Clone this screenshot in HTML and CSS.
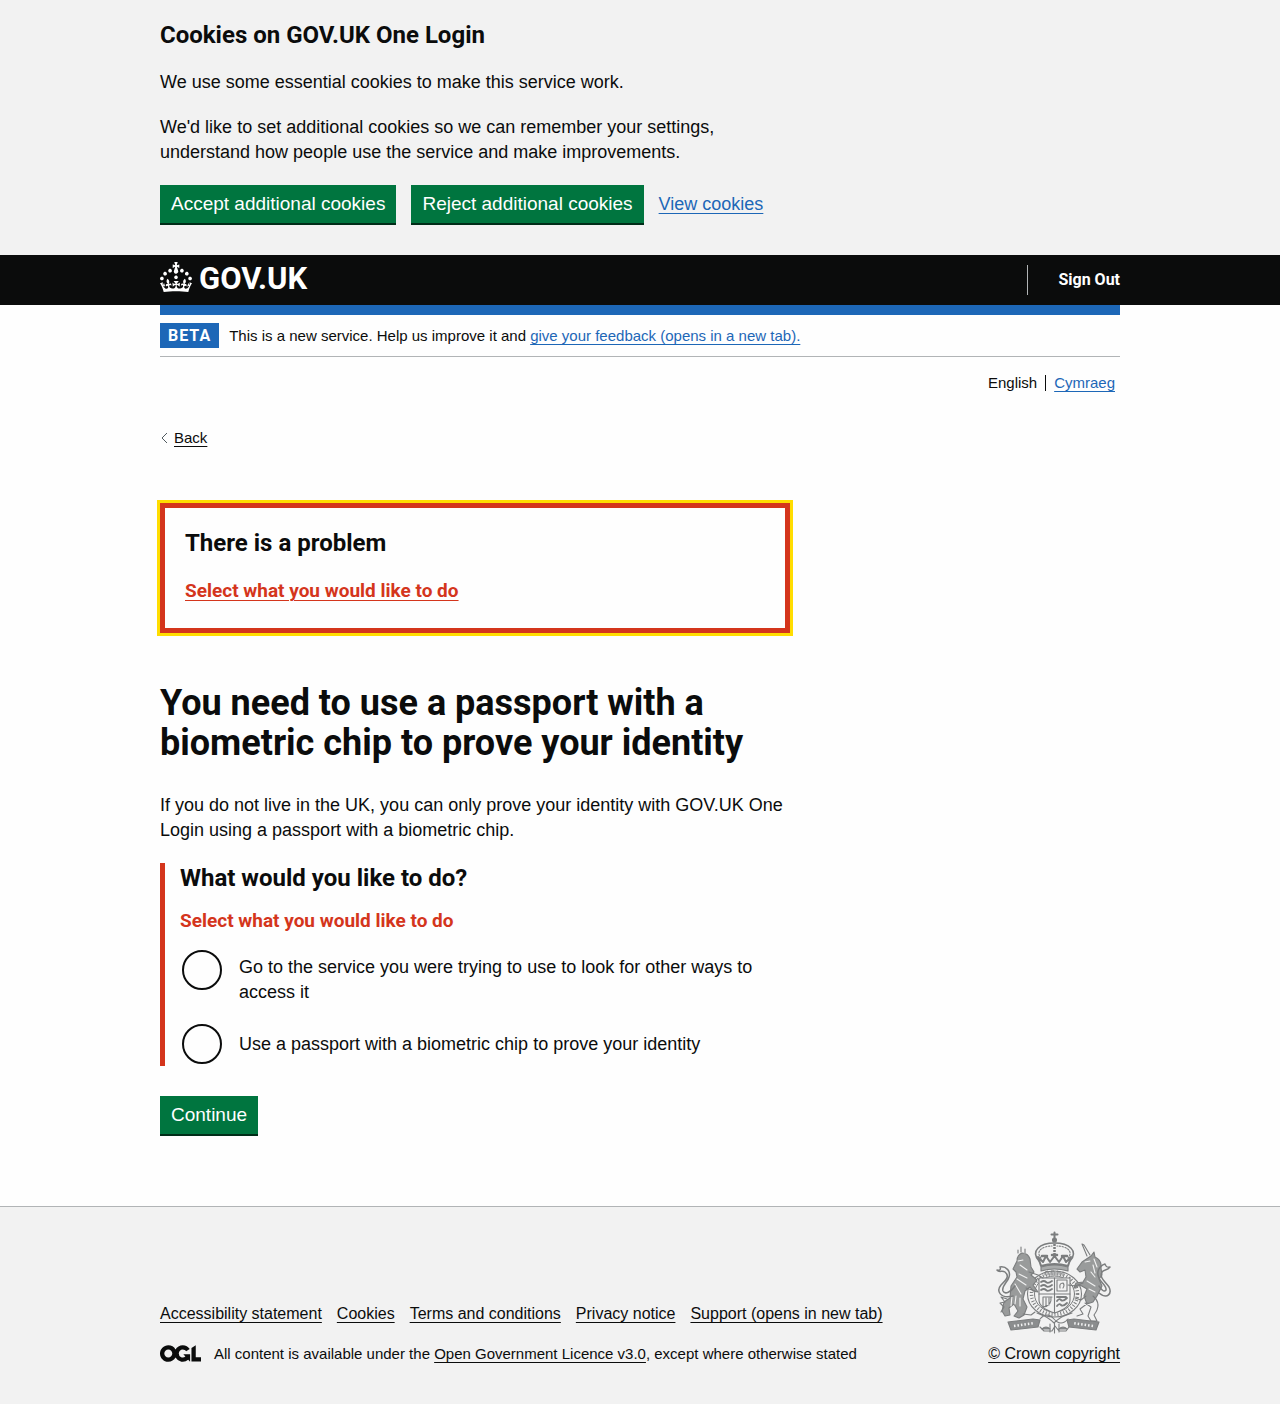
FILE: index.html
```
<!DOCTYPE html>
<html lang="en">
<head>
<meta charset="utf-8">
<meta name="viewport" content="width=device-width, initial-scale=1">
<title>Error: You need to use a passport with a biometric chip to prove your identity</title>
<link rel="stylesheet" href="styles.css">
</head>
<body>
<section class="cookie-banner" aria-label="Cookies on GOV.UK One Login">
  <div class="container">
    <div class="two-thirds">
      <h2 class="heading-m">Cookies on GOV.UK One Login</h2>
      <p class="body">We use some essential cookies to make this service work.</p>
      <p class="body">We'd like to set additional cookies so we can remember your settings, understand how people use the service and make improvements.</p>
      <div class="button-group">
        <button type="button" class="button">Accept additional cookies</button>
        <button type="button" class="button">Reject additional cookies</button>
        <a class="link" href="#cookies">View cookies</a>
      </div>
    </div>
  </div>
</section>

<header class="header">
  <div class="container header-row">
    <a class="header-logo" href="#home">
      <svg width="32" height="30" viewBox="0 0 32 30" fill="currentColor" aria-hidden="true"><path d="M22.6 10.4c-1 .4-2-.1-2.4-1-.4-.9.1-2 1-2.4.9-.4 2 .1 2.4 1s-.1 2-1 2.4m-5.9 6.7c-.9.4-2-.1-2.4-1-.4-.9.1-2 1-2.4.9-.4 2 .1 2.4 1s-.1 2-1 2.4m10.8-3.7c-1 .4-2-.1-2.4-1-.4-.9.1-2 1-2.4.9-.4 2 .1 2.4 1s0 2-1 2.4m3.3 4.8c-1 .4-2-.1-2.4-1-.4-.9.1-2 1-2.4.9-.4 2 .1 2.4 1s-.1 2-1 2.4M17 4.7l2.3 1.2V2.5l-2.3.7-.2-.2.9-3h-3.4l.9 3-.2.2c-.1.1-2.3-.7-2.3-.7v3.4L15 4.7c.1.1.1.2.2.2l-1.3 4c-.1.2-.1.4-.1.6 0 1.1.8 2 1.9 2.2h.7c1-.2 1.9-1.1 1.9-2.1 0-.2 0-.4-.1-.6l-1.3-4c-.1-.2 0-.2.1-.3m-7.6 5.7c.9.4 2-.1 2.4-1 .4-.9-.1-2-1-2.4-.9-.4-2 .1-2.4 1s0 2 1 2.4m-5 3c.9.4 2-.1 2.4-1 .4-.9-.1-2-1-2.4-.9-.4-2 .1-2.4 1s.1 2 1 2.4m-3.2 4.8c.9.4 2-.1 2.4-1 .4-.9-.1-2-1-2.4-.9-.4-2 .1-2.4 1s0 2 1 2.4m14.8 11c4.4 0 8.6.3 12.3.8 1.1-4.5 2.4-7 3.7-8.8l-2.5-.9c.2 1.3.3 1.9 0 2.7-.4-.4-.8-1.1-1.1-2.3l-1.2 4c.7-.5 1.3-.8 2-.9-1.1 2.5-2.6 3.1-3.5 3-1.1-.2-1.7-1.2-1.5-2.1.3-1.2 1.5-1.5 2.1-.1 1.1-2.3-.8-3-2-2.3 1.9-1.9 2.1-3.5.6-5.6-2.1 1.6-2.1 3.2-1.2 5.5-1.2-1.4-3.2-.6-2.5 1.6.9-1.4 2.1-.5 1.9.8-.2 1.1-1.7 2.1-3.5 1.9-2.7-.2-2.9-2.1-2.9-3.6.7-.1 1.9.5 2.9 1.9l.4-4.3c-1.1 1.1-2.1 1.4-3.2 1.4.4-1.2 2.1-3 2.1-3h-5.4s1.7 1.9 2.1 3c-1.1 0-2.1-.2-3.2-1.4l.4 4.3c1-1.4 2.2-2 2.9-1.9-.1 1.5-.2 3.4-2.9 3.6-1.9.2-3.4-.8-3.5-1.9-.2-1.3 1-2.2 1.9-.8.7-2.3-1.2-3-2.5-1.6.9-2.2.9-3.9-1.2-5.5-1.5 2-1.3 3.7.6 5.6-1.2-.7-3.1 0-2 2.3.6-1.4 1.8-1.1 2.1.1.2.9-.3 1.9-1.5 2.1-.9.2-2.4-.5-3.5-3 .6 0 1.2.3 2 .9l-1.2-4c-.3 1.1-.7 1.9-1.1 2.3-.3-.8-.2-1.4 0-2.7l-2.9.9C1.3 23 2.6 25.5 3.7 30c3.7-.5 7.9-.8 12.3-.8"/></svg>
      <span>GOV.UK</span>
    </a>
    <nav class="header-nav" aria-label="Account"><a href="#sign-out">Sign Out</a></nav>
  </div>
</header>

<div class="container page">
  <div class="phase-banner">
    <strong class="tag">BETA</strong>
    <span>This is a new service. Help us improve it and <a class="link" href="#feedback">give your feedback (opens in a new tab).</a></span>
  </div>

  <nav class="languages" aria-label="Language">
    <span class="language-current">English</span>
    <a class="link" href="#cy" lang="cy">Cymraeg</a>
  </nav>

  <a class="back-link" href="#back">
    <svg width="8" height="12" viewBox="0 0 8 12" fill="none" stroke="#505a5f" aria-hidden="true"><path d="M7 1 2 6l5 5"/></svg>
    <span>Back</span>
  </a>

  <main class="two-thirds">
    <div class="error-summary" role="alert">
      <h2 class="heading-m">There is a problem</h2>
      <ul class="error-list"><li><a href="#choice-service">Select what you would like to do</a></li></ul>
    </div>

    <h1 class="heading-l">You need to use a passport with a biometric chip to prove your identity</h1>
    <p class="body">If you do not live in the UK, you can only prove your identity with GOV.UK One Login using a passport with a biometric chip.</p>

    <form>
      <div class="form-group-error">
        <fieldset class="fieldset" aria-describedby="choice-error">
          <legend class="legend">What would you like to do?</legend>
          <p class="error-message" id="choice-error">Select what you would like to do</p>
          <div class="radios">
            <div class="radio-item">
              <input class="radio" type="radio" name="choice" id="choice-service">
              <label for="choice-service">Go to the service you were trying to use to look for other ways to access it</label>
            </div>
            <div class="radio-item">
              <input class="radio" type="radio" name="choice" id="choice-passport">
              <label for="choice-passport">Use a passport with a biometric chip to prove your identity</label>
            </div>
          </div>
        </fieldset>
      </div>
      <button type="button" class="button">Continue</button>
    </form>
  </main>
</div>

<footer class="footer">
  <div class="container footer-row">
    <div class="footer-meta">
      <ul class="footer-links">
        <li><a href="#accessibility">Accessibility statement</a></li>
        <li><a href="#cookies">Cookies</a></li>
        <li><a href="#terms">Terms and conditions</a></li>
        <li><a href="#privacy">Privacy notice</a></li>
        <li><a href="#support">Support (opens in new tab)</a></li>
      </ul>
      <div class="licence">
        <svg width="41" height="17" viewBox="0 0 483.2 195.7" fill="currentColor" aria-hidden="true"><path d="M421.5 142.8V.1l-50.7 32.3v161.1h112.4v-50.7zm-122.3-9.6A47.12 47.12 0 0 1 221 97.8c0-26 21.1-47.1 47.1-47.1 16.7 0 31.4 8.7 39.7 21.8l42.7-27.2A97.63 97.63 0 0 0 268.1 0c-36.5 0-68.3 20.1-85.1 49.7A98 98 0 0 0 97.8 0C43.9 0 0 43.9 0 97.8s43.9 97.8 97.8 97.8c36.5 0 68.3-20.1 85.1-49.7a97.76 97.76 0 0 0 149.6 25.4l19.4 22.2h3v-87.8h-80l24.3 27.5zM97.8 145c-26 0-47.1-21.1-47.1-47.1s21.1-47.1 47.1-47.1 47.1 21.1 47.1 47.1S123.8 145 97.8 145"/></svg>
        <span>All content is available under the <a href="#ogl">Open Government Licence v3.0</a>, except where otherwise stated</span>
      </div>
    </div>
    <a class="copyright" href="#copyright">
      <svg class="crest" width="118" height="104" viewBox="0 0 118 104" fill="none" stroke="#7b7d7e" stroke-width="1.1" stroke-linecap="round" stroke-linejoin="round" aria-hidden="true">
        <!-- crown -->
        <path d="M59.500 1.500v8M56.500 3.500h6" stroke-width="2"/>
        <circle cx="59.500" cy="9" r="2" fill="#7b7d7e"/>
        <path d="M44 30C35 20 45 12 59.500 12S84 20 75 30" stroke-width="1.500"/>
        <path d="M46 27C40 20 48 15 57 15M73 27c6-7-2-12-11-12" stroke-dasharray="1.500 1.500"/>
        <path d="M59.500 13v14" stroke-width="2.500" stroke-dasharray="2 1" stroke-linecap="butt"/>
        <path d="m43 26 5 5 3-6 4 6 4.500-6 4.500 6 4-6 3 6 5-5-3 9q-13.500-4-27 0z" stroke-width="2"/>
        <path d="M47 25h5M57 24h5M67 25h5" stroke-width="2.500"/>
        <path d="M46 36q13.500-4 27 0v4q-13.500-4-27 0z" fill="#a9abab"/>
        <path d="M50 44v-3l3-1v4M56 44v-4h3v4M62 44v-4l3 1v3M68 45v-4" stroke-width="1"/>
        <!-- garter and shield -->
        <ellipse cx="59.500" cy="63" rx="27" ry="23"/>
        <ellipse cx="59.500" cy="63" rx="23" ry="20.500" stroke-width="3.500" stroke-dasharray="1 2" stroke-linecap="butt"/>
        <ellipse cx="59.500" cy="63" rx="20" ry="18" stroke-width="1"/>
        <path d="M44 47h31v22q0 8-15.500 13Q44 77 44 69z" fill="#f2f2f2"/>
        <path d="M59.500 47v35M44 63h31"/>
        <path d="M46 51q3-2 5 0t6-1M46 55q3-2 5 0t6-1M46 59q3-2 5 0t6-1M62 75q2-3 4-1t6-2M62 70q2-3 4-1t6-2M62 66h9" stroke-width="1.800"/>
        <path d="M62 49h10v11H62zM65 57q-1-5 3-5 2 2 0 5M48 77V66h9M48 76q9-1 8-10M51 67v8M54 67v7"/>
        <!-- lion -->
        <path d="M22 30q0-6 5-8 6 0 8 6l1 8 3 5-3 3 6 5-4 5 5 7-5-1-3-4-5 4-2 8 4 8-3 8-5 3-5-2 4-5-4-7-5 4 1 7-5 1-3-5 2-9 6-4 1-12 6-9-1-5-3-3z" fill="#999b9b"/>
        <path d="M24 22l-1-5 4 2 3-2v5M23 30l5-1M25 34l7 5M24 43l8 4M22 48l9 6M20 53l6 10M17 65l-1 10M21 65l-1 8M25 67v8" stroke="#f2f2f2"/>
        <path d="M23 22v-3M26 21v-5M30 22v-4M34 41l9 3 5 3M31 57l9 3M12 68l-6-2 4 5-5 1 4 4-3 5M28 83l8 1 4-3"/>
        <path d="M18 65C5 68 1 60 6 54c5-5 9-9 4-13-3-2-6 1-8-2 3 1 4-1 3-3 6-1 11 4 9 10-1 5-8 9-6 14 2 4 8 1 12-5" stroke-width="1.500"/>
        <!-- unicorn -->
        <path d="m92 25-5-12 2 1 6 10" fill="#f2f2f2"/>
        <path d="m96 25 3-4 1 5q7 3 6 11l1 7-3 4 3 7-5 10-4 6-6 2-3-8 3-7-7-4-6 3 2-5 7-1 3-5-1-7-5 2-3-3 5-7z" fill="#999b9b"/>
        <path d="M90 31l5-1M99 28l3 8M98 34l2 8M96 41l4 5M92 50l8 5M94 58l6 3" stroke="#f2f2f2"/>
        <path d="m88 52-8 3-7-1M91 65l-5 4-6-2M98 65c6 5 7 11 1 19l3 6h-6l-3-5 3-9-6-4M93 72l-8 6 3 5-6 2"/>
        <path d="M104 62c9 7 13 0 10-6-4-6-10-9-7-15 2-3 5-1 8-5-4 1-4-1-5-3-6 2-9 8-6 14 2 5 8 8 7 12-2 3-5-1-7-4" stroke-width="1.500"/>
        <!-- motto scroll -->
        <path d="m13 91 25-3 7 1-2 7-27 3z" fill="#8b8d8e"/>
        <path d="m104 91-25-3-7 1 2 7 27 3z" fill="#8b8d8e"/>
        <path d="m19 95 20-3M98 95l-20-3" stroke="#f2f2f2" stroke-width="2.500" stroke-dasharray="1.500 2" stroke-linecap="butt"/>
        <path d="M45 88q7-8 14 0 7 8 14 0M45 83q8 3 14 9 6-6 14-9M49 85l-7-3M69 85l8-3M45 96l4 4h8l3-5 4 5h7l3-4M55 93v8M64 93v8M59.500 92v10"/>
        <path d="M47 98q4-4 8 0zM64 98q4-4 8 0z" fill="#8b8d8e"/>
      </svg>
      <span>© Crown copyright</span>
    </a>
  </div>
</footer>
</body>
</html>
```
FILE: styles.css
```
:root {
  --text: #0b0c0c;
  --blue: #1d67b7;
  --green: #00753f;
  --red: #d4351c;
  --grey: #f2f2f2;
  --rule: #b1b4b6;
  --body-font: "Liberation Sans", Arial, sans-serif;
  --bold-font: Roboto, "Liberation Sans", Arial, sans-serif;
}

* { box-sizing: border-box; }

body {
  margin: 0;
  background: #fefefe;
  color: var(--text);
  font: 18px/25px var(--body-font);
}

h1, h2, p, ul { margin: 0; padding: 0; }
ul { list-style: none; }

a {
  color: inherit;
  text-decoration-thickness: 1px;
  text-underline-offset: 3px;
}

.link { color: var(--blue); }

.container {
  max-width: 960px;
  margin: 0 auto;
}

.two-thirds { max-width: 630px; }

.heading-m {
  margin-bottom: 20px;
  font: bold 24px/30px var(--bold-font);
}

.heading-l {
  margin-bottom: 30px;
  font: bold 36px/40px var(--bold-font);
}

.body { margin-bottom: 20px; }

.button {
  height: 38px;
  padding: 0 11px;
  border: 0;
  border-radius: 0;
  background: var(--green);
  box-shadow: 0 2px 0 #002d18;
  color: #fff;
  font: 19px/38px var(--body-font);
  cursor: pointer;
}

.button-group {
  display: flex;
  align-items: center;
  gap: 15px;
}

.cookie-banner {
  padding: 20px 0 32px;
  background: var(--grey);
}

.header {
  background: var(--text);
  color: #fff;
}

.header-row {
  display: flex;
  align-items: center;
  justify-content: space-between;
  height: 50px;
}

.header a { text-decoration: none; }

.header-logo {
  display: flex;
  align-items: center;
  gap: 7px;
  padding-bottom: 6px;
  font: bold 31px/32px var(--bold-font);
}

.header-logo span { padding-top: 4px; }

.header-nav {
  padding-left: 30px;
  border-left: 1px solid var(--rule);
  font: bold 16px/30px var(--bold-font);
}

.page {
  padding-bottom: 72px;
  border-top: 10px solid var(--blue);
}

.phase-banner {
  display: flex;
  align-items: center;
  gap: 10px;
  padding: 8px 0;
  border-bottom: 1px solid var(--rule);
  font-size: 15px;
}

.tag {
  padding: 0 8px;
  background: var(--blue);
  color: #fff;
  font: bold 16px/25px var(--bold-font);
  letter-spacing: 1px;
}

.languages {
  display: flex;
  align-items: center;
  justify-content: flex-end;
  gap: 8px;
  padding: 18px 5px;
  font-size: 15px;
  line-height: 16px;
}

.language-current {
  padding-right: 8px;
  border-right: 1px solid var(--text);
}

.back-link {
  display: flex;
  align-items: center;
  gap: 6px;
  width: max-content;
  margin: 16px 0 53px;
  font-size: 15px;
  text-decoration: none;
}

.back-link span {
  text-decoration: underline;
  text-decoration-thickness: 1px;
}

.error-summary {
  margin-bottom: 50px;
  padding: 20px 20px 25px;
  border: 5px solid var(--red);
  outline: 3px solid #fd0;
}

.error-list,
.error-message {
  color: var(--red);
  font: bold 19px/25px var(--bold-font);
}

.form-group-error {
  margin-bottom: 30px;
  padding-left: 15px;
  border-left: 5px solid var(--red);
}

.fieldset {
  min-width: 0;
  margin: 0;
  padding: 0;
  border: 0;
}

.legend {
  margin-bottom: 15px;
  padding: 0;
  font: bold 24px/30px var(--bold-font);
}

.error-message { margin-bottom: 15px; }

.radios {
  display: flex;
  flex-direction: column;
  gap: 10px;
}

.radio-item {
  display: flex;
  align-items: flex-start;
  gap: 17px;
}

.radio {
  flex: none;
  appearance: none;
  width: 40px;
  height: 40px;
  margin: 2px 0 2px 2px;
  border: 2px solid var(--text);
  border-radius: 50%;
}

.radio:checked { box-shadow: inset 0 0 0 8px #fefefe, inset 0 0 0 20px var(--text); }

.radio-item label {
  align-self: center;
  padding: 7px 0;
}

.footer {
  padding: 24px 0 38px;
  border-top: 1px solid var(--rule);
  background: var(--grey);
  font-size: 16px;
}

.footer-row {
  display: flex;
  align-items: flex-end;
  justify-content: space-between;
}

.footer-links {
  display: flex;
  flex-wrap: wrap;
  gap: 15px;
  margin-bottom: 15px;
}

.licence {
  display: flex;
  align-items: center;
  gap: 13px;
  font-size: 15px;
}

.copyright {
  display: flex;
  flex-direction: column;
  align-items: center;
  gap: 6px;
}
```
